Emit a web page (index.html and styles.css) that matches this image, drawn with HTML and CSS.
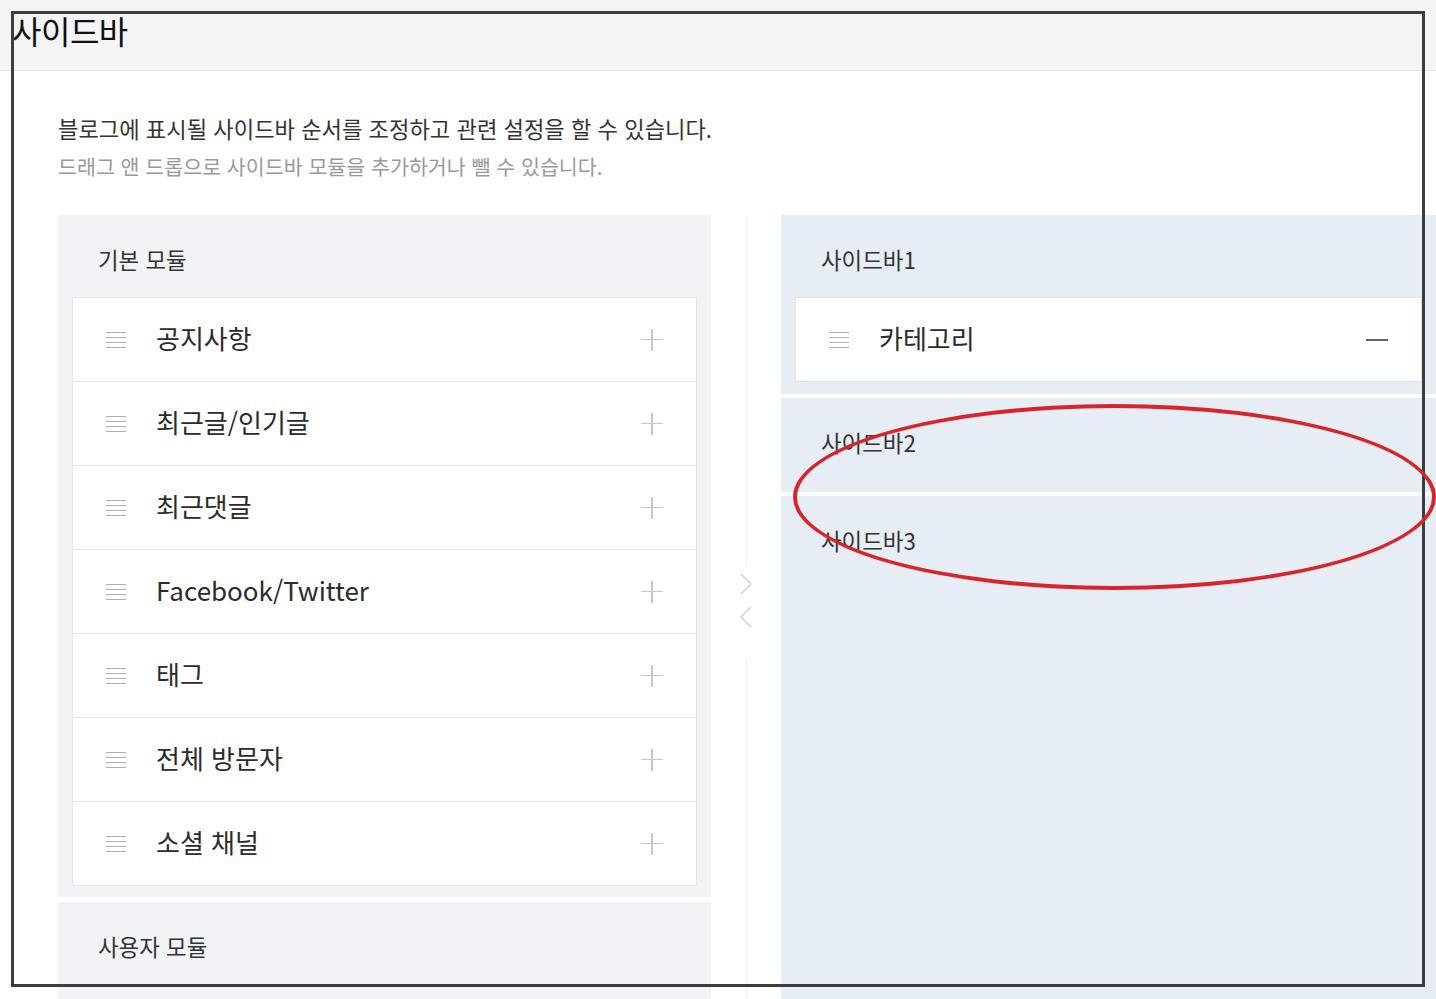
FILE: index.html
```html
<!DOCTYPE html>
<html lang="ko">
<head>
    <meta charset="UTF-8">
    <title>사이드바</title>
    <link rel="stylesheet" href="styles.css">
</head>
<body>
    <div class="page-head">
        <h1>사이드바</h1>
    </div>

    <div class="content">
        <div class="desc">
            <p class="desc-main">블로그에 표시될 사이드바 순서를 조정하고 관련 설정을 할 수 있습니다.</p>
            <p class="desc-sub">드래그 앤 드롭으로 사이드바 모듈을 추가하거나 뺄 수 있습니다.</p>
        </div>

        <div class="columns">
            <div class="col col-left">
                <div class="box">
                    <h3 class="box-title">기본 모듈</h3>
                    <ul class="mod-list">
                        <li class="mod"><span class="grip"></span><span class="mod-name">공지사항</span><span class="act plus"></span></li>
                        <li class="mod"><span class="grip"></span><span class="mod-name">최근글/인기글</span><span class="act plus"></span></li>
                        <li class="mod"><span class="grip"></span><span class="mod-name">최근댓글</span><span class="act plus"></span></li>
                        <li class="mod"><span class="grip"></span><span class="mod-name">Facebook/Twitter</span><span class="act plus"></span></li>
                        <li class="mod"><span class="grip"></span><span class="mod-name">태그</span><span class="act plus"></span></li>
                        <li class="mod"><span class="grip"></span><span class="mod-name">전체 방문자</span><span class="act plus"></span></li>
                        <li class="mod"><span class="grip"></span><span class="mod-name">소셜 채널</span><span class="act plus"></span></li>
                    </ul>
                </div>
                <div class="box box-fill">
                    <h3 class="box-title">사용자 모듈</h3>
                </div>
            </div>

            <div class="mid">
                <span class="mid-line"></span>
                <div class="arrows">
                    <svg width="14" height="22" viewBox="0 0 14 22"><path d="M2 1 L12 11 L2 21" fill="none" stroke="#cfd2d6" stroke-width="1.5"/></svg>
                    <svg width="14" height="22" viewBox="0 0 14 22"><path d="M12 1 L2 11 L12 21" fill="none" stroke="#cfd2d6" stroke-width="1.5"/></svg>
                </div>
                <span class="mid-line mid-line-fill"></span>
            </div>

            <div class="col col-right">
                <div class="bar">
                    <h3 class="box-title">사이드바1</h3>
                    <ul class="mod-list">
                        <li class="mod"><span class="grip"></span><span class="mod-name">카테고리</span><span class="act minus"></span></li>
                    </ul>
                </div>
                <div class="bar">
                    <h3 class="box-title">사이드바2</h3>
                </div>
                <div class="bar box-fill">
                    <h3 class="box-title">사이드바3</h3>
                </div>
            </div>
        </div>
    </div>

    <!-- annotation marks over the capture -->
    <div class="mark-frame"></div>
    <div class="mark-circle"></div>
</body>
</html>
```

FILE: styles.css
```css
* {
    box-sizing: border-box;
}
body {
    margin: 0;
    min-height: 100vh;
    display: flex;
    flex-direction: column;
    font-family: "Noto Sans CJK KR", "Noto Sans", sans-serif;
    color: #333;
    background: #fff;
    overflow: hidden;
}
h1, h3, p, ul {
    margin: 0;
    padding: 0;
}
.page-head {
    height: 71px;
    background: #f3f4f6;
    border-bottom: 1px solid #e4e6e9;
    padding: 10px 0 0 12px;
}
.page-head h1 {
    font-size: 32px;
    font-weight: 400;
    line-height: 40px;
    color: #111;
    letter-spacing: -0.5px;
}
.content {
    flex: 1;
    display: flex;
    flex-direction: column;
    padding: 38px 0 0 58px;
}
.desc {
    margin-bottom: 30px;
}
.desc p {
    line-height: 38px;
}
.desc-main {
    font-size: 22.2px;
    color: #333;
}
.desc-sub {
    font-size: 20.6px;
    color: #999;
}
.columns {
    flex: 1;
    display: grid;
    grid-template-columns: 653px 70px 655px;
}
.col {
    display: flex;
    flex-direction: column;
}
.col-left {
    gap: 5px;
}
.col-right {
    gap: 4px;
}
.box {
    background: #f1f3f6;
    padding: 0 14px 11px;
}
.bar {
    background: #e6edf4;
    padding: 0 14px 12px;
}
.box-fill {
    flex: 1;
}
.box-title {
    height: 82px;
    padding-top: 6px;
    line-height: 76px;
    padding-left: 26px;
    font-size: 22.4px;
    font-weight: 400;
    color: #333;
}
.mod-list {
    list-style: none;
    background: #fff;
    border: 1px solid #e2e5e9;
}
.col-right .mod-list {
    border-color: #dfe5ec;
}
.mod {
    height: 84px;
    display: flex;
    align-items: center;
    padding: 0 33px 0 33px;
    border-bottom: 1px solid #e2e5e9;
}
.mod:last-child {
    border-bottom: none;
    height: 83px;
}
.grip {
    width: 20px;
    height: 16px;
    background: repeating-linear-gradient(to bottom, #aeb1b5 0, #aeb1b5 1px, transparent 1px, transparent 5px);
}
.mod-name {
    flex: 1;
    margin: 0 0 4px 30px;
    font-size: 26px;
    color: #2b2b2b;
}
.act {
    position: relative;
    width: 22px;
    height: 22px;
}
.plus::before,
.plus::after {
    content: "";
    position: absolute;
    background: #c4c6c9;
}
.plus::before {
    left: 0;
    top: 10px;
    width: 22px;
    height: 1.5px;
}
.plus::after {
    left: 10px;
    top: 0;
    width: 1.5px;
    height: 22px;
}
.minus::before {
    content: "";
    position: absolute;
    left: 0;
    top: 10px;
    width: 22px;
    height: 2px;
    background: #666;
}
.mid {
    display: flex;
    flex-direction: column;
    align-items: center;
}
.mid-line {
    width: 1px;
    height: 352px;
    background: #f0f1f3;
}
.mid-line-fill {
    flex: 1;
    height: auto;
}
.arrows {
    display: flex;
    flex-direction: column;
    gap: 11px;
    padding: 6px 0 30px;
}
.arrows svg {
    display: block;
}
.mark-frame {
    position: absolute;
    left: 11px;
    top: 11px;
    width: 1414px;
    height: 976px;
    border: 3px solid #3b3e41;
    pointer-events: none;
}
.mark-circle {
    position: absolute;
    left: 793px;
    top: 404px;
    width: 643px;
    height: 186px;
    border: 4px solid #d8242b;
    border-radius: 50%;
    pointer-events: none;
}
```
